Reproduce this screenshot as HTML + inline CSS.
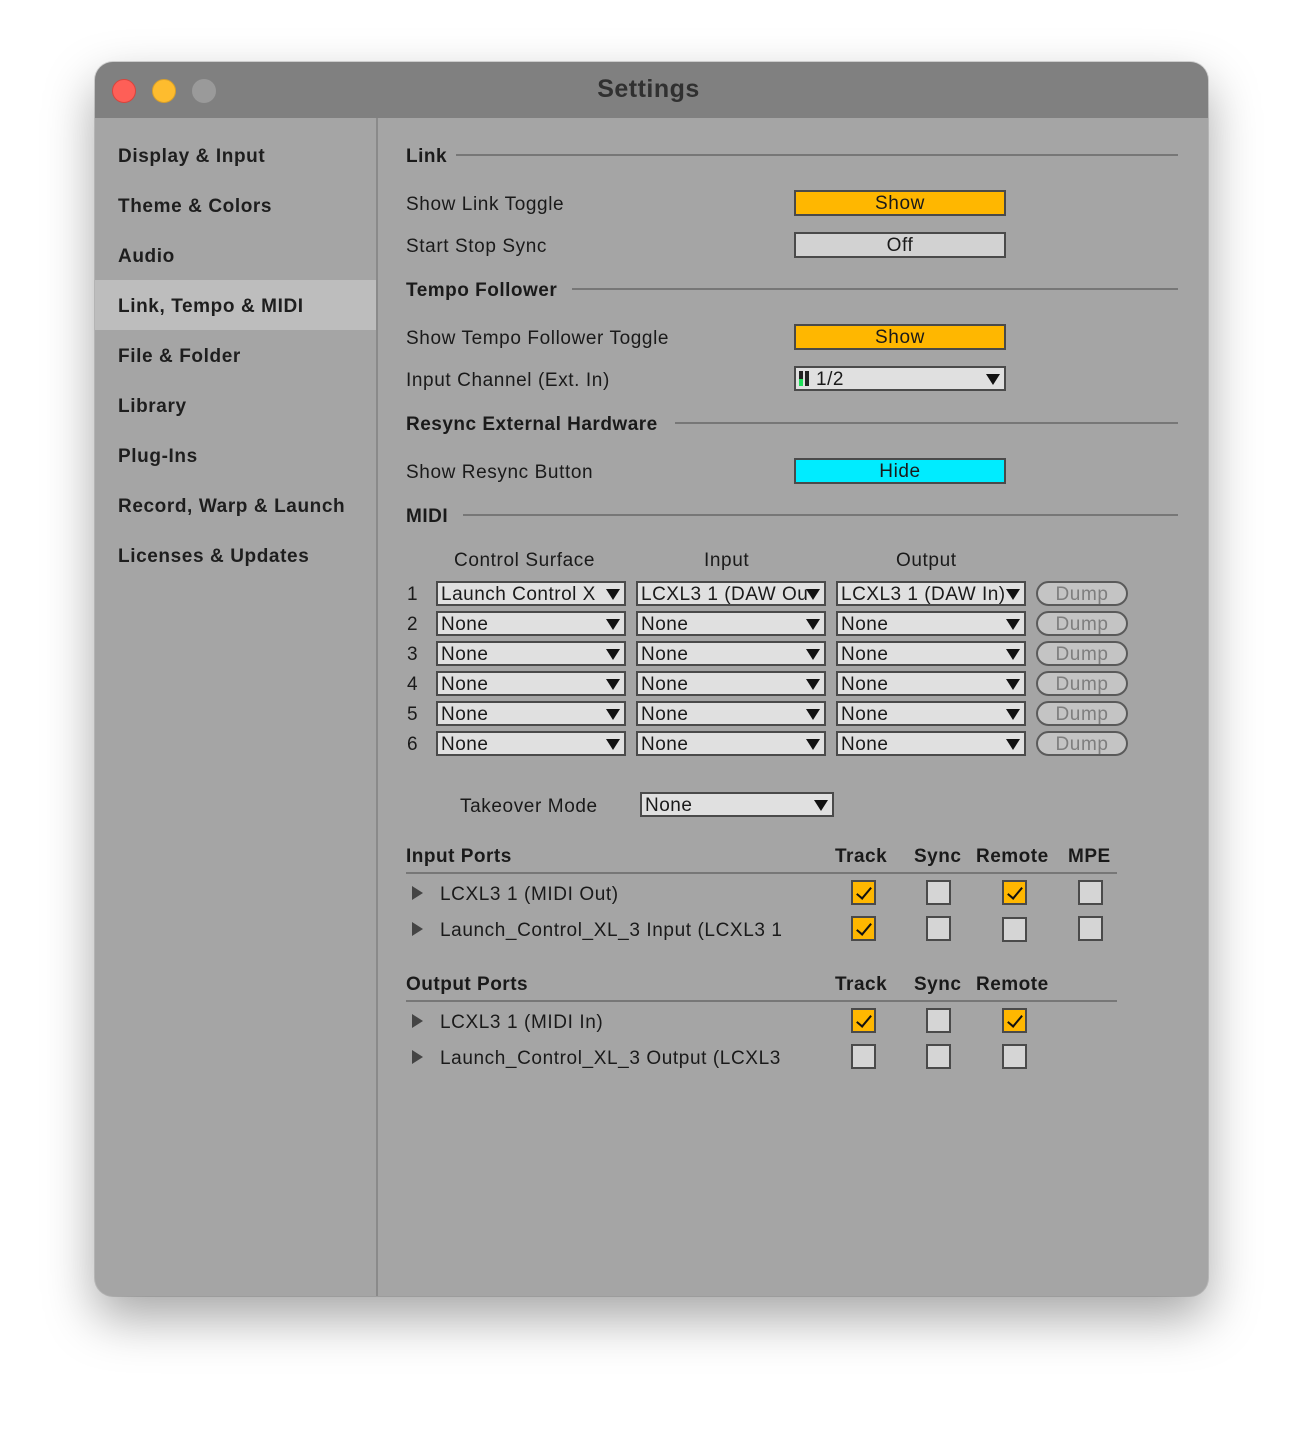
<!DOCTYPE html>
<html><head><meta charset="utf-8"><style>
*{margin:0;padding:0;box-sizing:border-box}
body{width:1304px;height:1430px;background:#fff;position:relative;font-family:"Liberation Sans",sans-serif;color:#1a1a1a;overflow:hidden}
.win{position:absolute;left:95px;top:62px;width:1113px;height:1234px;border-radius:18px;background:#a5a5a5;overflow:hidden;box-shadow:0 22px 50px rgba(0,0,0,.35),0 0 0 1px rgba(0,0,0,.15)}
.title{position:absolute;left:0;top:0;width:100%;height:56px;background:#808080;text-align:center;font-weight:bold;font-size:25px;line-height:54px;color:#303030;letter-spacing:0.5px;padding-right:6px}
.dot{position:absolute;top:17px;width:24px;height:24px;border-radius:50%}
.side{position:absolute;left:0;top:56px;width:283px;bottom:0;border-right:2px solid #8a8a8a}
.a{position:absolute;white-space:nowrap}
.si{position:absolute;left:23px;font-size:19px;font-weight:bold;color:#1e1e1e;letter-spacing:0.6px;margin-top:2px}
.t{font-size:19px;letter-spacing:0.6px;margin-top:2px}
.hd{font-size:19px;font-weight:bold;letter-spacing:0.5px;margin-top:2px}
.ln{position:absolute;height:2px;background:#777}
.btn{position:absolute;left:699px;width:212px;height:26px;border:2px solid #4a4a4a;text-align:center;font-size:19px;line-height:24px;letter-spacing:0.6px}
.sel{position:absolute;height:25px;border:2px solid #4a4a4a;background:#e0e0e0;font-size:19px;line-height:23px;padding-left:3px;white-space:nowrap;overflow:hidden;letter-spacing:0.5px}
.sel:after{content:"";position:absolute;right:4px;top:6px;border-left:7px solid transparent;border-right:7px solid transparent;border-top:11px solid #111}
.dump{position:absolute;left:941px;width:92px;height:25px;border:2px solid #5a5a5a;border-radius:13px;background:#c4c4c4;color:#7e7e7e;text-align:center;font-size:19px;line-height:23px;letter-spacing:0.6px}
.cb{position:absolute;width:25px;height:25px;border:2px solid #4a4a4a;background:#d5d5d5}
.cb.on{background:#ffb700}
.cb.on:after{content:"";position:absolute;left:7px;top:2px;width:6px;height:13px;border-right:2px solid #111;border-bottom:2px solid #111;transform:rotate(40deg)}
.tri{position:absolute;width:0;height:0;border-top:7px solid transparent;border-bottom:7px solid transparent;border-left:11px solid #444}
</style></head><body>
<div class="win">
<div class="title">Settings</div>
<div class="dot" style="left:17px;background:#fe5f57;border:1px solid #d9443d"></div>
<div class="dot" style="left:57px;background:#febc2e;border:1px solid #d9a02a"></div>
<div class="dot" style="left:97px;background:#9a9a9a"></div>
<div class="side">
<div class="a" style="left:0;top:162px;width:281px;height:50px;background:#bdbdbd"></div>
<div class="si" style="top:26px">Display &amp; Input</div>
<div class="si" style="top:76px">Theme &amp; Colors</div>
<div class="si" style="top:126px">Audio</div>
<div class="si" style="top:176px">Link, Tempo &amp; MIDI</div>
<div class="si" style="top:226px">File &amp; Folder</div>
<div class="si" style="top:276px">Library</div>
<div class="si" style="top:326px">Plug-Ins</div>
<div class="si" style="top:376px">Record, Warp &amp; Launch</div>
<div class="si" style="top:426px">Licenses &amp; Updates</div>
</div>

<div class="a hd" style="left:311px;top:82px">Link</div><div class="ln" style="left:361px;top:92px;width:722px"></div>
<div class="a t" style="left:311px;top:130px">Show Link Toggle</div>
<div class="btn" style="top:128px;background:#ffb700">Show</div>
<div class="a t" style="left:311px;top:172px">Start Stop Sync</div>
<div class="btn" style="top:170px;background:#d2d2d2">Off</div>
<div class="a hd" style="left:311px;top:216px">Tempo Follower</div><div class="ln" style="left:477px;top:226px;width:606px"></div>
<div class="a t" style="left:311px;top:264px">Show Tempo Follower Toggle</div>
<div class="btn" style="top:262px;background:#ffb700">Show</div>
<div class="a t" style="left:311px;top:306px">Input Channel (Ext. In)</div>
<div class="sel" style="left:699px;top:304px;width:212px;padding-left:20px">1/2
<div class="a" style="left:3px;top:3px;width:4px;height:15px;background:#222"></div><div class="a" style="left:3px;top:11px;width:4px;height:7px;background:#1ee05a"></div><div class="a" style="left:9px;top:3px;width:4px;height:15px;background:#222"></div></div>
<div class="a hd" style="left:311px;top:350px">Resync External Hardware</div><div class="ln" style="left:580px;top:360px;width:503px"></div>
<div class="a t" style="left:311px;top:398px">Show Resync Button</div>
<div class="btn" style="top:396px;background:#00ecff">Hide</div>
<div class="a hd" style="left:311px;top:442px">MIDI</div><div class="ln" style="left:368px;top:452px;width:715px"></div>

<div class="a t" style="left:359px;top:486px">Control Surface</div>
<div class="a t" style="left:609px;top:486px">Input</div>
<div class="a t" style="left:801px;top:486px">Output</div>

<div class="a t" style="left:312px;top:520px">1</div>
<div class="sel" style="left:341px;top:519px;width:190px">Launch Control X</div>
<div class="sel" style="left:541px;top:519px;width:190px">LCXL3 1 (DAW Ou</div>
<div class="sel" style="left:741px;top:519px;width:190px">LCXL3 1 (DAW In)</div>
<div class="dump" style="top:519px">Dump</div>

<div class="a t" style="left:312px;top:550px">2</div>
<div class="sel" style="left:341px;top:549px;width:190px">None</div><div class="sel" style="left:541px;top:549px;width:190px">None</div><div class="sel" style="left:741px;top:549px;width:190px">None</div><div class="dump" style="top:549px">Dump</div>
<div class="a t" style="left:312px;top:580px">3</div>
<div class="sel" style="left:341px;top:579px;width:190px">None</div><div class="sel" style="left:541px;top:579px;width:190px">None</div><div class="sel" style="left:741px;top:579px;width:190px">None</div><div class="dump" style="top:579px">Dump</div>
<div class="a t" style="left:312px;top:610px">4</div>
<div class="sel" style="left:341px;top:609px;width:190px">None</div><div class="sel" style="left:541px;top:609px;width:190px">None</div><div class="sel" style="left:741px;top:609px;width:190px">None</div><div class="dump" style="top:609px">Dump</div>
<div class="a t" style="left:312px;top:640px">5</div>
<div class="sel" style="left:341px;top:639px;width:190px">None</div><div class="sel" style="left:541px;top:639px;width:190px">None</div><div class="sel" style="left:741px;top:639px;width:190px">None</div><div class="dump" style="top:639px">Dump</div>
<div class="a t" style="left:312px;top:670px">6</div>
<div class="sel" style="left:341px;top:669px;width:190px">None</div><div class="sel" style="left:541px;top:669px;width:190px">None</div><div class="sel" style="left:741px;top:669px;width:190px">None</div><div class="dump" style="top:669px">Dump</div>

<div class="a t" style="left:365px;top:732px">Takeover Mode</div>
<div class="sel" style="left:545px;top:730px;width:194px">None</div>

<div class="a hd" style="left:311px;top:782px">Input Ports</div>
<div class="a hd" style="left:740px;top:782px">Track</div>
<div class="a hd" style="left:819px;top:782px">Sync</div>
<div class="a hd" style="left:881px;top:782px">Remote</div>
<div class="a hd" style="left:973px;top:782px">MPE</div>
<div class="ln" style="left:311px;top:810px;width:711px"></div>
<div class="tri" style="left:317px;top:824px"></div><div class="a t" style="left:345px;top:820px">LCXL3 1 (MIDI Out)</div>
<div class="cb on" style="left:756px;top:818px"></div><div class="cb" style="left:831px;top:818px"></div><div class="cb on" style="left:907px;top:818px"></div><div class="cb" style="left:983px;top:818px"></div>
<div class="tri" style="left:317px;top:860px"></div><div class="a t" style="left:345px;top:856px">Launch_Control_XL_3 Input (LCXL3 1</div>
<div class="cb on" style="left:756px;top:854px"></div><div class="cb" style="left:831px;top:854px"></div><div class="cb" style="left:907px;top:855px"></div><div class="cb" style="left:983px;top:854px"></div>

<div class="a hd" style="left:311px;top:910px">Output Ports</div>
<div class="a hd" style="left:740px;top:910px">Track</div>
<div class="a hd" style="left:819px;top:910px">Sync</div>
<div class="a hd" style="left:881px;top:910px">Remote</div>
<div class="ln" style="left:311px;top:938px;width:711px"></div>
<div class="tri" style="left:317px;top:952px"></div><div class="a t" style="left:345px;top:948px">LCXL3 1 (MIDI In)</div>
<div class="cb on" style="left:756px;top:946px"></div><div class="cb" style="left:831px;top:946px"></div><div class="cb on" style="left:907px;top:946px"></div>
<div class="tri" style="left:317px;top:988px"></div><div class="a t" style="left:345px;top:984px">Launch_Control_XL_3 Output (LCXL3</div>
<div class="cb" style="left:756px;top:982px"></div><div class="cb" style="left:831px;top:982px"></div><div class="cb" style="left:907px;top:982px"></div>
</div>
</body></html>
